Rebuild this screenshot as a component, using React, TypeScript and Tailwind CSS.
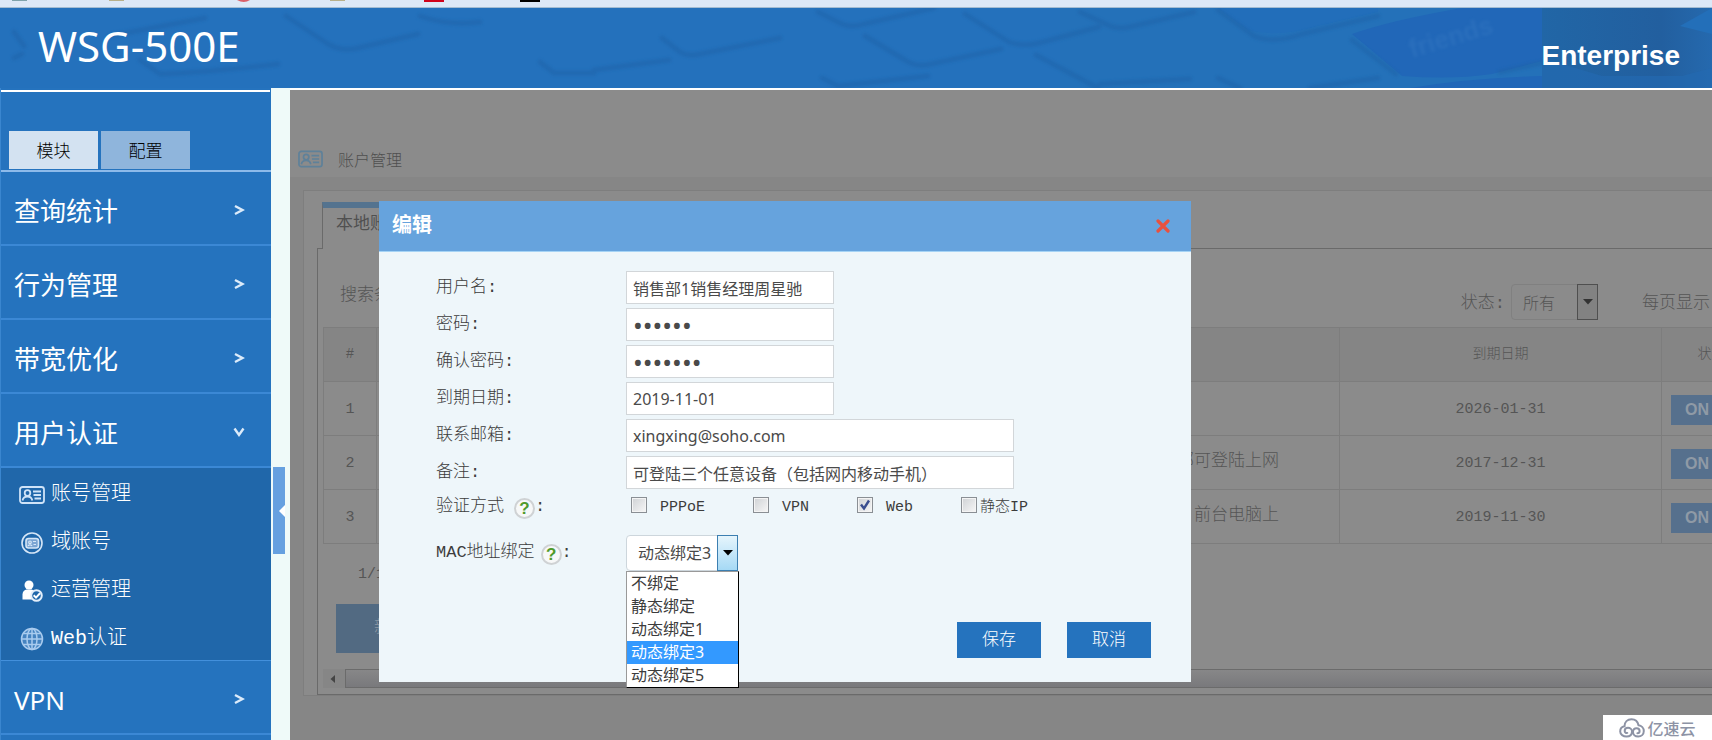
import { useState } from 'react';
import type { ReactNode } from 'react';

type SubItem = { label: string; icon: ReactNode };
type MenuItem = { label: string; children?: SubItem[] };

const song = "font-['Liberation_Mono','Noto_Sans_CJK_SC',monospace] font-light";
const hei = "font-['Noto_Sans','Noto_Sans_CJK_SC',sans-serif]";

function CardIcon({ className }: { className?: string }) {
  return (
    <svg viewBox="0 0 26 18" className={className} fill="none" stroke="currentColor" strokeWidth="1.8">
      <rect x="1" y="1" width="24" height="16" rx="2.5" />
      <circle cx="8.5" cy="7" r="2.8" />
      <path d="M3.5 14.5c.6-3 2.4-4 5-4s4.200 1 4.800 4" />
      <path d="M14 5.500h8M14.500 9h7.500M15.500 12.500h6.500" />
    </svg>
  );
}

function DomainIcon() {
  return (
    <svg viewBox="0 0 24 24" className="h-6 w-6" fill="none" stroke="#d5e6f7" strokeWidth="1.6">
      <circle cx="12" cy="12" r="10" />
      <rect x="6" y="7.500" width="12.500" height="9.500" rx="2.500" fill="#7ba5d3" />
      <circle cx="10" cy="11.300" r="1.300" strokeWidth="1.200" />
      <path d="M8 15c.4-1.500 3.600-1.500 4 0M13 10.500h3M13.500 13.500h2.500" strokeWidth="1.200" />
    </svg>
  );
}

function OperatorIcon() {
  return (
    <svg viewBox="0 0 24 24" className="h-6 w-6">
      <circle cx="9" cy="6" r="4.500" fill="#fff" />
      <path d="M2.500 20.500v-5c0-3 2-4.500 4-5h5c2 .5 3.500 2 3.500 4v6z" fill="#fff" />
      <circle cx="16.500" cy="16.500" r="5.300" fill="#2067aa" stroke="#e3eefa" strokeWidth="2" />
      <path d="M13.700 16.300l2.300 2.300 4-4.300" fill="none" stroke="#fff" strokeWidth="2" />
    </svg>
  );
}

function WebIcon() {
  return (
    <svg viewBox="0 0 24 24" className="h-6 w-6" fill="none" stroke="#a9cbee" strokeWidth="1.500">
      <circle cx="12" cy="12" r="10.500" fill="#5f96cf" fillOpacity="0.600" />
      <ellipse cx="12" cy="12" rx="5" ry="10.500" />
      <path d="M12 1.500v21M1.500 12h21M3.500 6.500h17M3.500 17.500h17" />
    </svg>
  );
}

const menu: MenuItem[] = [
  { label: '查询统计' },
  { label: '行为管理' },
  { label: '带宽优化' },
  {
    label: '用户认证',
    children: [
      { label: '账号管理', icon: <CardIcon className="h-[18px] w-[26px] text-[#cfe3f8]" /> },
      { label: '域账号', icon: <DomainIcon /> },
      { label: '运营管理', icon: <OperatorIcon /> },
      { label: 'Web认证', icon: <WebIcon /> },
    ],
  },
  { label: 'VPN' },
];

const rows = [
  { id: 1, remark: '', expire: '2026-01-31' },
  { id: 2, remark: '部可登陆上网', expire: '2017-12-31' },
  { id: 3, remark: '前台电脑上', expire: '2019-11-30' },
];

const bindings = ['不绑定', '静态绑定', '动态绑定1', '动态绑定3', '动态绑定5'];

function BookmarkStrip() {
  return (
    <svg className="block h-2 w-full bg-[#dce8f7]">
      <rect x="12" y="0" width="15" height="1" fill="#7ea2ab" />
      <rect x="109" y="0" width="15" height="1" fill="#b8b08a" />
      <path d="M237 0h13q-6 4-13 0z" fill="#d9606a" />
      <rect x="330" y="0" width="15" height="1" fill="#b8b08a" />
      <rect x="424" y="0" width="20" height="2" fill="#d0021b" />
      <rect x="520" y="0" width="20" height="2" fill="#000" />
      <rect x="0" y="7" width="100%" height="1" fill="#a3bcd2" />
    </svg>
  );
}

// Faint keyboard texture behind the product name
function HeaderArt() {
  return (
    <svg
      className="absolute inset-0 h-full w-full"
      viewBox="0 0 1712 80"
      preserveAspectRatio="xMaxYMid slice"
      fill="none"
    >
      <defs>
        <filter id="soft" x="-5%" y="-50%" width="110%" height="200%">
          <feGaussianBlur stdDeviation="1.600" />
        </filter>
        <linearGradient id="edge" x1="0" x2="1" y1="0" y2="0">
          <stop offset="0" stopColor="#2166a6" />
          <stop offset="0.700" stopColor="#225f9f" />
          <stop offset="1" stopColor="#2569ae" />
        </linearGradient>
      </defs>
      <rect x="1060" y="0" width="490" height="80" fill="#2371b5" opacity="0.500" />
      <rect x="1542" y="0" width="170" height="80" fill="url(#edge)" />
      <path d="M1542 50l60 18h80l30-8v20h-170z" fill="#2369b0" opacity="0.700" />
      <path d="M1712 0v26l-32-8 32-18z" fill="#236fb9" />
      <path d="M1352 26q40-14 110-26h80v53l-50 13q-40 6-90 2z" fill="#2167b8" />
      <path d="M1410 80q60-10 132-12v12z" fill="#2167b8" />
      <path d="M1218 0l30 22q30 8 70-4l60-14V0z" fill="#226eba" />
      <g stroke="#1f61a6" strokeWidth="5" strokeLinecap="round" strokeLinejoin="round" opacity="0.450" filter="url(#soft)">
        <path d="M14 24l10 14M14 50l8-4M110 28l95-18M140 52l20 14q50-2 118-10" />
        <path d="M286 8l42 28q14 8 30 4l60-14M420 8q28 10 60 6" />
        <path d="M540 54l14 11h40M594 62l75-10" />
        <path d="M662 30l18 14q8 5 20 2l80-16" />
        <path d="M818 4l24 12q10 4 22 0l70-16" />
        <path d="M865 28l40 24q12 8 26 4l70-15M965 6l44 28q14 5 30 1l60-16" />
        <path d="M1080 4l30 14q10 4 24 0l60-14M1036 47l62 33M822 70l16 8 90-10M1100 76l90-5" />
        <path d="M1218 2l36 26q20 8 48-2l76-18M1218 70l22 10M1310 80l68-10" />
        <path d="M1352 32l44 34M1500 64l46-10" />
      </g>
      <text
        x="1412"
        y="50"
        transform="rotate(-17 1412 50)"
        className="font-['Liberation_Sans',sans-serif] text-[26px] font-bold"
        fill="#3a7dc4"
        opacity="0.350"
        filter="url(#soft)"
      >
        friends
      </text>
    </svg>
  );
}

function Chevron({ open }: { open?: boolean }) {
  return (
    <svg viewBox="0 0 12 12" className="mt-1 h-3 w-3" fill="none" stroke="#dcebfa" strokeWidth="2.400">
      {open ? <path d="M1.500 2.500L6 9l4.500-6.500" /> : <path d="M2 2l7.500 4L2 10" />}
    </svg>
  );
}

function Sidebar() {
  return (
    <aside className="w-[271px] shrink-0 border-l border-[#3a86cf] bg-[#2573be]">
      <div className="h-0.5 bg-[#2573be]" />
      <div className="mr-px h-0.5 bg-white" />
      <div className="flex gap-[3px] border-b-2 border-[#8dbaea] pt-[39px] pb-px pl-2">
        <button type="button" className={`${song} h-[38px] w-[89px] bg-[#d3e2f1] pt-1.5 text-[17px] text-black`}>
          模块
        </button>
        <button type="button" className={`${song} h-[38px] w-[89px] bg-[#8fb5dc] pt-1.5 text-[17px] text-black`}>
          配置
        </button>
      </div>
      <nav>
        {menu.map((item) => (
          <div key={item.label}>
            <a
              href="#"
              className={`${hei} flex h-[74px] items-center border-b-2 border-[#3b88d5] pr-[26px] pl-[13px] text-[26px] text-white`}
            >
              <span className="flex-1 pt-1.5">{item.label}</span>
              <Chevron open={!!item.children} />
            </a>
            {item.children && (
              <ul className="border-b border-[#4390dc] bg-[#2067aa]">
                {item.children.map((sub) => (
                  <li key={sub.label}>
                    <a href="#" className={`${song} flex h-12 items-center gap-1.5 pt-1.5 pl-[18px] text-xl text-white`}>
                      <span className="flex w-[26px] justify-center">{sub.icon}</span>
                      {sub.label}
                    </a>
                  </li>
                ))}
              </ul>
            )}
          </div>
        ))}
      </nav>
    </aside>
  );
}

function Accounts() {
  return (
    <div className={`${song} flex flex-1 flex-col bg-[#868686] text-[17px] text-[#555]`}>
      <div className="flex h-[87px] items-center gap-[15px] bg-[#8b8b8b] pt-[50px] pl-2">
        <CardIcon className="h-[18px] w-[25px] text-[#5f8199]" />
        <h1 className="pt-1.5 text-base text-[#4f4f4f]">账户管理</h1>
      </div>
      <section className="mt-[13px] ml-[13px] border-t border-b border-l border-[#7e7e7e] bg-[#8b8b8b] pt-[11px]">
        <div className="ml-[18px] flex">
          <button
            type="button"
            className="-mb-px h-[47px] w-[110px] border-t-[6px] border-r border-l border-t-[#54738f] border-r-[#6a6a6a] border-l-[#6a6a6a] bg-[#8b8b8b] pb-2 pl-[13px] text-left font-normal text-[#505050]"
          >
            本地账户
          </button>
        </div>
        <div className="ml-[13px] overflow-hidden border-t border-b border-l border-[#6a6a6a] pl-[5px]">
          <div className="flex items-center pt-[34px] pb-1.5 pl-[17px]">
            <span className="pb-3">搜索条件</span>
            <label htmlFor="status" className="ml-auto pt-1 whitespace-nowrap">
              状态:
            </label>
            <div className="relative mr-11 ml-1.5">
              <select
                id="status"
                className={`${hei} block h-9 w-[87px] appearance-none rounded-sm border border-[#808080] bg-[#8b8b8b] pt-0.5 pl-[11px] text-base`}
              >
                <option>所有</option>
              </select>
              <DropArrow muted />
            </div>
            <span className="w-[70px] pt-1 whitespace-nowrap">每页显示：</span>
          </div>
          <table className="w-[calc(100%+50px)] table-fixed border-collapse text-center">
            <thead>
              <tr className="h-[54px] bg-[#858585] text-sm">
                <th className="w-[53px] border border-[#7d7d7d] font-light">#</th>
                <th className="border border-[#7d7d7d] font-light" />
                <th className="w-[322px] border border-[#7d7d7d] font-light">到期日期</th>
                <th className="w-[100px] border border-[#7d7d7d] font-light">状态</th>
              </tr>
            </thead>
            <tbody>
              {rows.map((row) => (
                <tr key={row.id} className="h-[54px]">
                  <td className="border border-[#7d7d7d] pt-1 text-[15px]">{row.id}</td>
                  <td className="border border-[#7d7d7d] pr-[60px] text-right">{row.remark}</td>
                  <td className="border border-[#7d7d7d] pt-1 text-[15px]">{row.expire}</td>
                  <td className="border border-[#7d7d7d] pt-1 pl-[9px]">
                    <button
                      type="button"
                      className="block h-[30px] w-[82px] bg-[#56708d] pl-[14px] text-left font-['Liberation_Sans',sans-serif] text-base font-bold text-[#8f9aa6]"
                    >
                      ON
                    </button>
                  </td>
                </tr>
              ))}
            </tbody>
          </table>
          <div className="pt-5 pl-[35px] text-[15px]">1/1</div>
          <button type="button" className="mt-[18px] ml-[13px] block h-[49px] w-[110px] bg-[#526a82] text-[#8f9aa6]">
            新增
          </button>
          <div className="mt-4 mb-1.5 flex h-[19px] items-center bg-[#868686]">
            <svg viewBox="0 0 22 18" className="h-[18px] w-[22px]">
              <path d="M12 5v8L7.500 9z" fill="#444" />
            </svg>
            <div className="h-full flex-1 border-t border-b border-l border-[#6b6b6b] bg-linear-to-b from-[#878788] to-[#79797c]" />
          </div>
        </div>
      </section>
    </div>
  );
}

function DropArrow({ muted }: { muted?: boolean }) {
  return (
    <span
      className={
        muted
          ? 'pointer-events-none absolute inset-y-0 right-0 flex w-[21px] items-center justify-center border border-[#4f4f4f] bg-[#828282]'
          : 'pointer-events-none absolute inset-y-0 right-0 flex w-[21px] items-center justify-center border border-[#3c7fb1] bg-linear-to-b from-[#e6f5fc] to-[#a5d9f5]'
      }
    >
      <svg viewBox="0 0 10 6" className="h-1.5 w-2.5">
        <path d="M0 0h10L5 5.500z" fill={muted ? '#333' : '#000'} />
      </svg>
    </span>
  );
}

function Help() {
  return (
    <button
      type="button"
      className="mt-0.5 h-[21px] w-[21px] rounded-full border-2 border-[#cfd2d4] bg-[#f7f8f8] font-['Liberation_Sans',sans-serif] text-[17px] leading-[17px] font-bold text-[#4f9a2a]"
    >
      ?
    </button>
  );
}

function Field({ id, label, type = 'text', value, wide }: {
  id: string;
  label: string;
  type?: string;
  value: string;
  wide?: boolean;
}) {
  return (
    <div className="flex h-[33px] items-center">
      <label htmlFor={id} className="w-[190px]">
        {label}:
      </label>
      <input
        id={id}
        type={type}
        defaultValue={value}
        className={`${hei} h-[33px] border border-[#d2d6d9] bg-white font-normal text-[#4a4a4a] ${wide ? 'w-[388px]' : 'w-[208px]'} ${type === 'password' ? 'px-1.5 pt-0.5 text-[26px]' : 'px-1.5 text-base'}`}
      />
    </div>
  );
}

function Check({ label, checked, tight }: { label: string; checked?: boolean; tight?: boolean }) {
  return (
    <label className={`flex items-center ${tight ? 'gap-[3px]' : 'w-[104px] gap-[13px]'}`}>
      <span className="relative -mt-1 h-4 w-4">
        <input
          type="checkbox"
          defaultChecked={checked}
          className="peer block h-4 w-4 appearance-none border border-[#8a8f94] bg-linear-to-br from-[#cfd2d5] to-[#f7f7f7] shadow-[inset_0_0_0_1px_#f4f4f4]"
        />
        <svg
          viewBox="0 0 16 16"
          className="pointer-events-none absolute inset-0 hidden h-4 w-4 peer-checked:block"
          fill="none"
          stroke="#3b4f90"
          strokeWidth="2.400"
        >
          <path d="M4 7.500l3 4L12 3.500" />
        </svg>
      </span>
      <span className="pt-0.5">{label}</span>
    </label>
  );
}

function EditDialog() {
  const [binding, setBinding] = useState('动态绑定3');

  return (
    <div
      role="dialog"
      aria-label="编辑"
      className={`${song} mt-[111px] ml-[89px] flex w-[812px] flex-col bg-[#eef6fa] text-[17px] text-[#3c3c3c]`}
    >
      <div className="flex h-[51px] items-center justify-between border-b border-[#a5d3f5] bg-[#66a3dd] pr-[21px] pl-[13px]">
        <h2 className="pt-0.5 text-xl font-bold text-white">编辑</h2>
        <button type="button" aria-label="关闭">
          <svg viewBox="0 0 14 14" className="h-[14px] w-[14px]" stroke="#e8513f" strokeWidth="3.200" strokeLinecap="round">
            <path d="M2 2l10 10M12 2L2 12" />
          </svg>
        </button>
      </div>
      <form className="flex flex-col pt-[19px] pr-10 pb-6 pl-[57px]">
        <div className="flex flex-col gap-1">
          <Field id="name" label="用户名" value="销售部1销售经理周星驰" />
          <Field id="pwd" label="密码" type="password" value="123456" />
          <Field id="pwd2" label="确认密码" type="password" value="1234567" />
          <Field id="expire" label="到期日期" value="2019-11-01" />
          <Field id="mail" label="联系邮箱" value="xingxing@soho.com" wide />
          <Field id="remark" label="备注" value="可登陆三个任意设备（包括网内移动手机）" wide />
        </div>
        <div className="flex h-9 items-center">
          <div className="flex w-[195px] items-center">
            <span className="mr-2.5">验证方式</span>
            <Help />:
          </div>
          <div className="flex items-center text-[15px]">
            <span className="mr-[18px]">
              <Check label="PPPoE" />
            </span>
            <Check label="VPN" />
            <Check label="Web" checked />
            <Check label="静态IP" tight />
          </div>
        </div>
        <div className="mt-2.5 flex h-9 items-center">
          <div className="flex w-[190px] items-center">
            <label htmlFor="binding" className="mr-1.5">
              MAC地址绑定
            </label>
            <Help />:
          </div>
          <div className="relative">
            <select
              id="binding"
              value={binding}
              onChange={(e) => setBinding(e.target.value)}
              className={`${hei} block h-9 w-28 appearance-none rounded-sm border border-[#cdd6dc] bg-white pl-[11px] text-base font-normal text-[#4a4a4a]`}
            >
              {bindings.map((b) => (
                <option key={b}>{b}</option>
              ))}
            </select>
            <DropArrow />
            <ul
              role="listbox"
              className={`${hei} absolute top-full left-0 w-[113px] border border-black border-t-[#999] border-l-[#999] bg-white text-base leading-[23px] font-normal`}
            >
              {bindings.map((b) => (
                <li
                  key={b}
                  role="option"
                  aria-selected={b === binding}
                  onClick={() => setBinding(b)}
                  className={b === binding ? 'bg-[#3399ff] pl-1 text-white' : 'pl-1'}
                >
                  {b}
                </li>
              ))}
            </ul>
          </div>
        </div>
        <div className="mt-[51px] flex justify-end gap-[26px]">
          <button type="button" className="h-9 w-[84px] bg-[#2573be] pt-0.5 text-white">
            保存
          </button>
          <button type="button" className="h-9 w-[84px] bg-[#2573be] pt-0.5 text-white">
            取消
          </button>
        </div>
      </form>
    </div>
  );
}

function Watermark() {
  return (
    <div className="absolute right-0 bottom-0 flex h-[25px] w-[109px] items-center justify-center gap-0.5 bg-white">
      <svg viewBox="0 0 26 20" className="h-5 w-[26px]" fill="none" stroke="#8d93a5" strokeWidth="2" strokeLinecap="round">
        <path d="M13 13.500c0 3-2.200 5-5.500 5S1.200 16.500 1.200 13.500s2-5 4.300-5.300C5.500 4 8.500 1.200 12.500 1.200c3.500 0 6.300 2.300 7 6 3 .3 5.300 2.800 5.300 5.800 0 3.300-2.600 5.500-5.600 5.500-3.200 0-5.200-2-5.200-4.500s1.600-3.800 3.600-3.800 3 1.300 3 2.800-1 2.200-2.200 2.200" />
        <path d="M13 13.500c0-2-1.800-3.800-4-3.800s-3.300 1.500-3.300 3.200 1.300 2.300 2.600 2" />
      </svg>
      <span className="font-['Noto_Sans_CJK_SC',sans-serif] text-base leading-6 font-medium text-[#8d93a5]">亿速云</span>
    </div>
  );
}

export default function App() {
  return (
    <div className="relative flex h-screen flex-col overflow-hidden bg-[#868686]">
      <BookmarkStrip />
      <header className="relative flex h-20 shrink-0 items-center justify-between bg-[#2471bc] pr-8 pl-[38px] text-white">
        <HeaderArt />
        <div className={`${hei} relative pb-1 text-[42px] leading-none`}>WSG-500E</div>
        <div className="relative pt-4 font-['Liberation_Sans',sans-serif] text-[28px] leading-none font-bold">
          Enterprise
        </div>
      </header>
      <div className="flex min-h-0 flex-1">
        <Sidebar />
        <div className="flex w-[19px] shrink-0 flex-col bg-[#effaf9] pt-[379px] pl-0.5">
          <button type="button" aria-label="收起" className="flex h-[87px] w-3 items-center justify-end bg-[#66a0e0]">
            <svg viewBox="0 0 6 12" className="h-3 w-1.5">
              <path d="M6 0v12L0 6z" fill="#fff" />
            </svg>
          </button>
        </div>
        <main className="relative flex min-w-0 flex-1 flex-col border-t-2 border-white">
          <Accounts />
          <div className="absolute inset-0">
            <EditDialog />
          </div>
        </main>
      </div>
      <Watermark />
    </div>
  );
}
